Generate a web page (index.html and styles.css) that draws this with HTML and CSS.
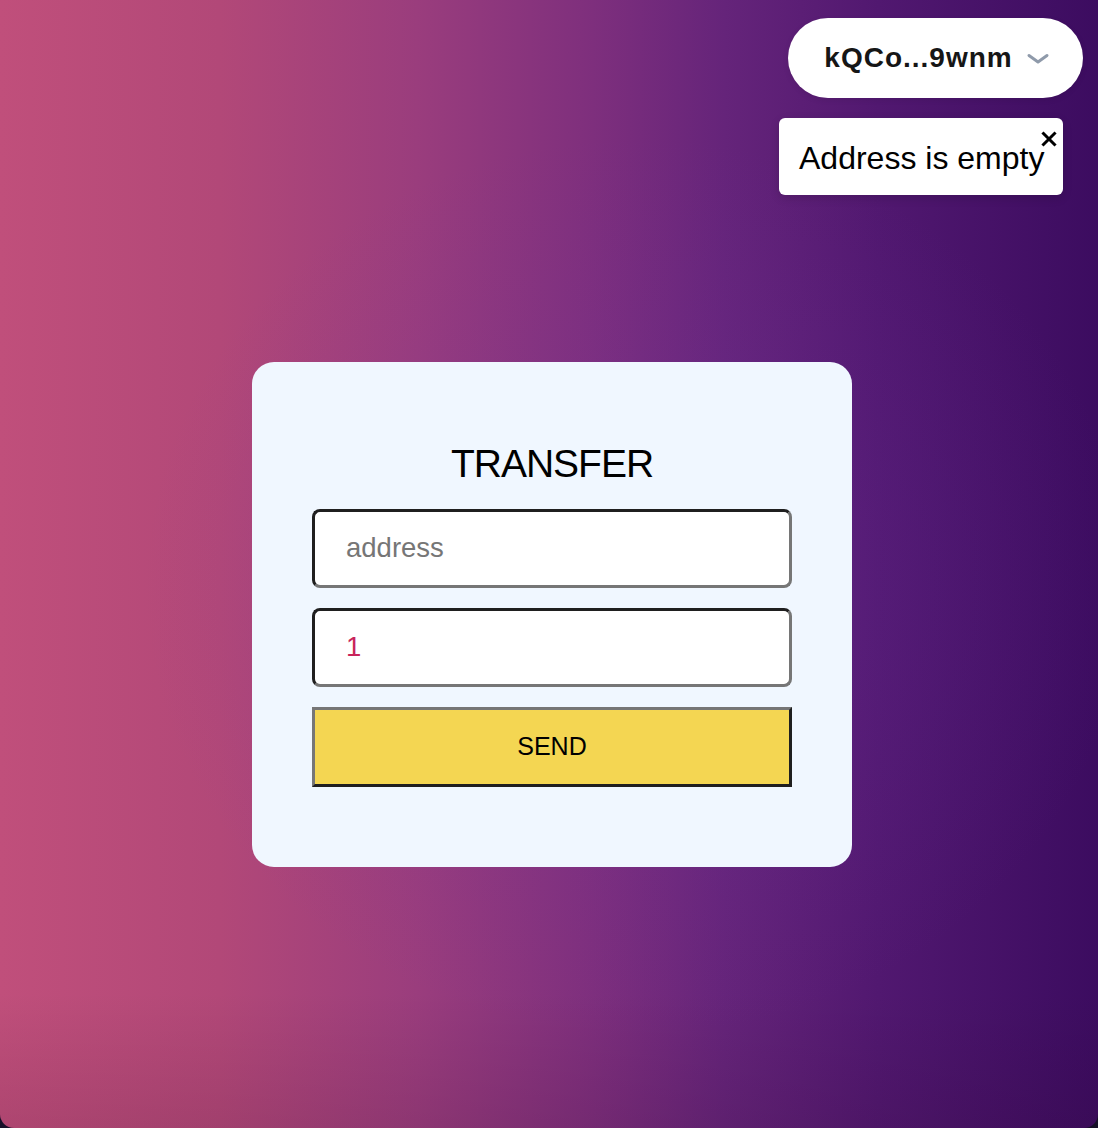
FILE: index.html
```html
<!DOCTYPE html>
<html lang="en">
<head>
<meta charset="utf-8">
<title>Transfer</title>
<link rel="stylesheet" href="styles.css">
</head>
<body>
<div class="app">
  <header class="topbar">
    <button class="wallet" type="button">
      <span class="wallet-addr">kQCo...9wnm</span>
      <svg class="chev" width="24" height="14" viewBox="0 0 24 14" aria-hidden="true"><path d="M3 3.5 L12 10 L21 3.5" fill="none" stroke="#8f9aaa" stroke-width="3" stroke-linecap="round" stroke-linejoin="round"/></svg>
    </button>
    <div class="toast">
      <span class="toast-text">Address is empty</span>
      <svg class="toast-close" width="16" height="16" viewBox="0 0 16 16" aria-hidden="true"><path d="M2.5 2.5 L13.5 13.5 M13.5 2.5 L2.5 13.5" stroke="#000" stroke-width="3" stroke-linecap="square"/></svg>
    </div>
  </header>
  <main class="main">
    <section class="card">
      <h1 class="title">TRANSFER</h1>
      <input class="field" type="text" placeholder="address">
      <input class="field field-value" type="text" value="1">
      <button class="send" type="button">SEND</button>
    </section>
  </main>
</div>
</body>
</html>
```

FILE: styles.css
```css
html {
  margin: 0;
  padding: 0;
  background: #161028;
  height: 100%;
}
body {
  margin: 0;
  height: 1128px;
  font-family: "Liberation Sans", Arial, Helvetica, sans-serif;
  border-radius: 0 0 14px 14px;
  overflow: hidden;
  background:
    radial-gradient(ellipse 45% 40% at 58% 52%, rgba(110, 50, 160, 0.28), rgba(110, 50, 160, 0) 100%),
    linear-gradient(180deg, rgba(0, 0, 0, 0) 88%, rgba(40, 0, 30, 0.12) 100%),
    linear-gradient(90deg, #c04f7b 0%, #b24878 20%, #9a3d7d 38%, #7e2f7d 54%, #65247a 66%, #511870 80%, #3c0c60 100%);
}
.app {
  height: 100%;
  display: flex;
  flex-direction: column;
}
.topbar {
  height: 100px;
  position: relative;
  flex: none;
}
.wallet {
  position: absolute;
  top: 18px;
  right: 15px;
  width: 295px;
  height: 80px;
  border: none;
  border-radius: 40px;
  background: #ffffff;
  display: flex;
  align-items: center;
  justify-content: center;
  gap: 13px;
  padding: 0 0 0 3px;
  font-family: "Liberation Sans", Arial, Helvetica, sans-serif;
  font-weight: bold;
  font-size: 28px;
  color: #161616;
  box-shadow: 0 2px 6px rgba(0, 0, 0, 0.08);
}
.wallet-addr {
  letter-spacing: 1px;
}
.chev {
  display: block;
  margin-top: 2px;
}
.toast {
  position: absolute;
  top: 118px;
  right: 35px;
  width: 284px;
  height: 77px;
  box-sizing: border-box;
  background: #ffffff;
  border-radius: 6px;
  display: flex;
  align-items: center;
  padding: 0 0 0 20px;
  box-shadow: 0 3px 10px rgba(0, 0, 0, 0.15);
}
.toast-text {
  font-size: 32px;
  color: #000000;
  margin-top: 3px;
}
.toast-close {
  position: absolute;
  top: 13px;
  right: 6px;
  display: block;
}
.main {
  flex: 1;
  display: flex;
  align-items: center;
  justify-content: center;
  padding-left: 6px;
}
.card {
  width: 600px;
  box-sizing: border-box;
  background: #f0f7ff;
  border-radius: 22px;
  padding: 78px 60px 80px;
  display: flex;
  flex-direction: column;
}
.title {
  margin: 0 0 22px;
  font-weight: normal;
  font-size: 39px;
  line-height: 47px;
  letter-spacing: -1px;
  text-align: center;
  color: #000;
}
.field {
  height: 79px;
  box-sizing: border-box;
  border: 3px solid;
  border-color: #1f1f1f #767676 #767676 #1f1f1f;
  border-radius: 8px;
  background: #ffffff;
  padding: 0 0 0 31px;
  font-family: "Liberation Sans", Arial, Helvetica, sans-serif;
  font-size: 27.5px;
  color: #c8245b;
  margin: 0 0 20px;
  outline: none;
}
.field::placeholder {
  color: #767676;
}
.send {
  height: 80px;
  box-sizing: border-box;
  border: 3px solid;
  border-color: #767676 #1f1f1f #1f1f1f #767676;
  border-radius: 0;
  background: #f4d652;
  font-family: "Liberation Sans", Arial, Helvetica, sans-serif;
  font-size: 25px;
  color: #000;
  padding: 0;
}
```
